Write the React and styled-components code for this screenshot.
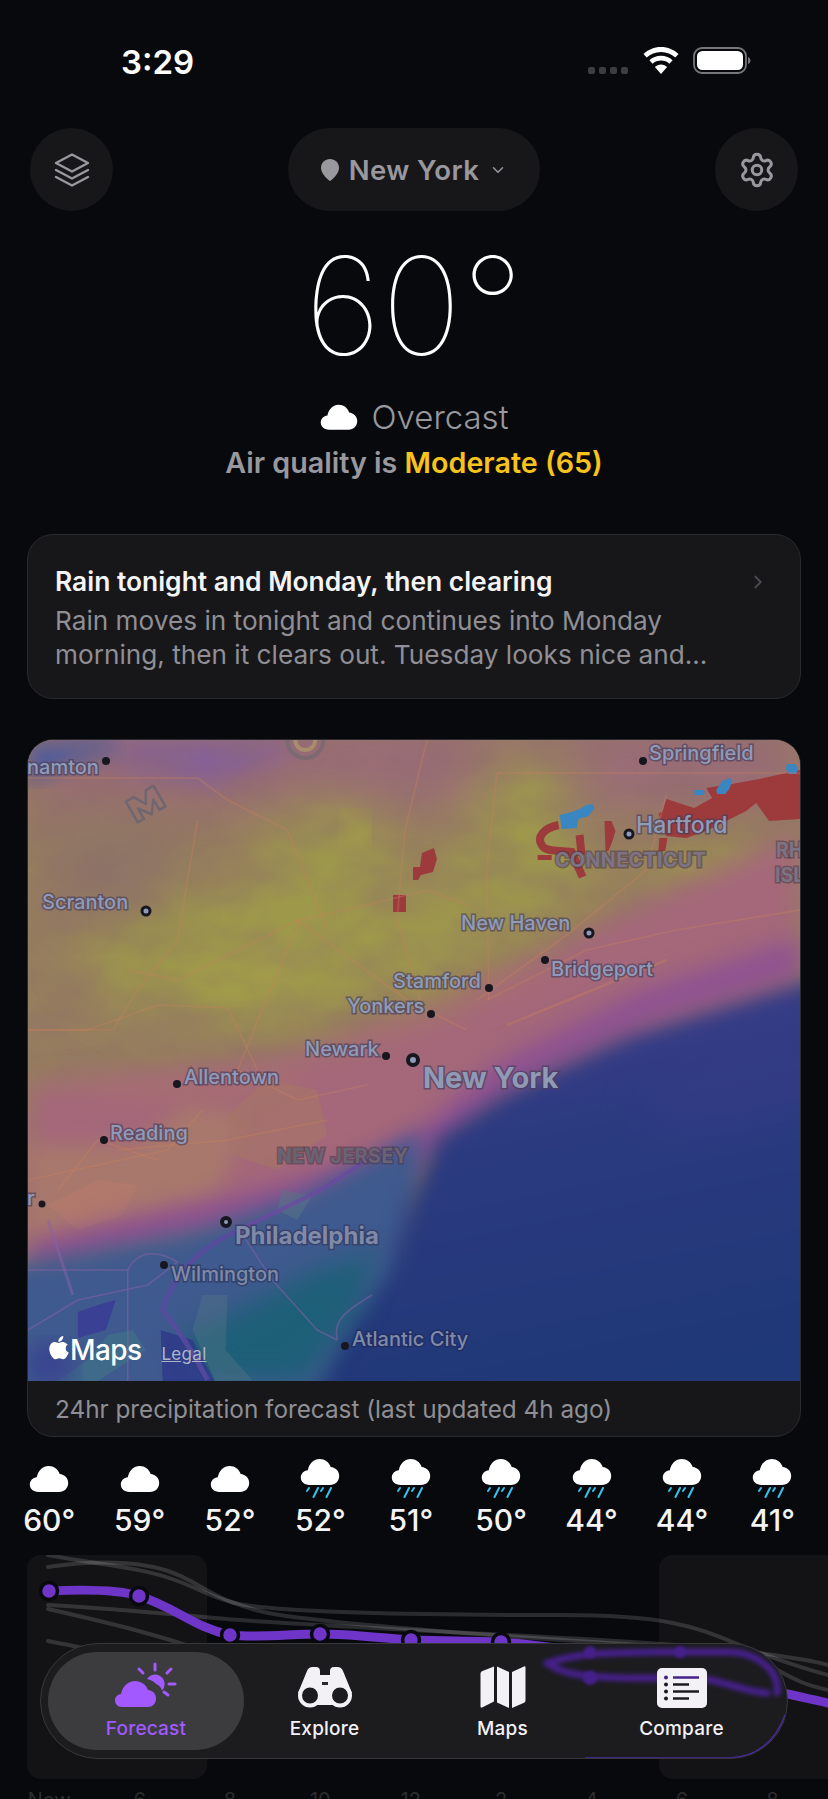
import React from "react";
import styled, { createGlobalStyle } from "styled-components";
import { Settings, ChevronDown, ChevronRight } from "lucide-react";

const GlobalStyle = createGlobalStyle`
  html, body {
    margin: 0;
    padding: 0;
    background: #08090c;
  }
  * {
    box-sizing: border-box;
  }
`;

const Page = styled.div`
  position: relative;
  width: 828px;
  height: 1799px;
  overflow: hidden;
  background: #08090c;
  color: #fff;
  font-family: Inter, "Liberation Sans", sans-serif;
`;

const StatusBar = styled.div`
  height: 128px;
  padding: 42px 77px 0 121px;
  display: flex;
  justify-content: space-between;
  align-items: flex-start;
`;
const Time = styled.div`
  font-size: 33px;
  line-height: 40px;
  font-weight: 600;
`;
const StatusIcons = styled.div`
  display: flex;
  align-items: flex-start;
  margin-top: 5px;
`;
const SignalDots = styled.div`
  display: flex;
  gap: 4px;
  margin: 20px 15px 0 0;
`;
const SignalDot = styled.span`
  width: 7px;
  height: 7px;
  border-radius: 2px;
  background: #3d3d40;
`;
const WifiSlot = styled.div`
  margin-right: 14px;
`;

const TopBar = styled.div`
  height: 83px;
  padding: 0 30px;
  display: flex;
  justify-content: space-between;
`;
const RoundButton = styled.div`
  width: 83px;
  height: 83px;
  border-radius: 50%;
  background: #17171a;
  display: flex;
  align-items: center;
  justify-content: center;
  color: #98989e;
`;
const LocationPill = styled.div`
  width: 252px;
  height: 83px;
  border-radius: 42px;
  background: #17171a;
  color: #98989e;
  font-size: 27.5px;
  font-weight: 600;
  letter-spacing: 0.4px;
  display: flex;
  align-items: center;
  justify-content: center;
  gap: 10px;
`;

const Hero = styled.div`
  display: flex;
  flex-direction: column;
  align-items: center;
`;
const BigTemp = styled.div`
  margin-top: 30px;
  height: 130px;
  font-size: 136px;
  line-height: 130px;
  font-weight: 100;
`;
const Condition = styled.div`
  margin-top: 25px;
  display: flex;
  align-items: center;
  gap: 14px;
  font-size: 33px;
  line-height: 42px;
  font-weight: 300;
  color: #98989e;
`;
const AirQuality = styled.div`
  margin-top: 5px;
  font-size: 28.7px;
  line-height: 40px;
  font-weight: 600;
  color: #98989e;
`;
const AirValue = styled.span`
  color: #f7c31c;
`;

const SummaryCard = styled.div`
  position: relative;
  margin: 51px 27px 0;
  height: 165px;
  padding: 28px 27px 0;
  border-radius: 26px;
  background: #17171a;
  border: 1.5px solid #2a2a2d;
`;
const SummaryTitle = styled.div`
  font-size: 26.4px;
  line-height: 36px;
  font-weight: 600;
  color: #f4f4f6;
`;
const SummaryText = styled.div`
  margin-top: 5px;
  font-size: 26.2px;
  line-height: 34px;
  color: #8f8f95;
  white-space: nowrap;
`;
const SummaryChevron = styled.div`
  position: absolute;
  top: 36px;
  right: 31px;
  color: #4a4a4e;
`;

const MapCard = styled.div`
  margin: 40px 27px 0;
  height: 698px;
  border-radius: 26px;
  background: #17171a;
  border: 1.5px solid #2b2b2e;
  overflow: hidden;
  display: flex;
  flex-direction: column;
`;
const MapArea = styled.div`
  position: relative;
  height: 641px;
  flex: none;
  overflow: hidden;
  background: #957d60;
`;
const MapDrawing = styled.svg`
  display: block;
  width: 100%;
  height: 100%;
`;
const MapLabel = styled.span`
  position: absolute;
  left: ${(p) => p.$x - 28}px;
  top: ${(p) => p.$y - 740}px;
  transform: translateY(-50%);
  font-size: ${(p) => p.$size || 20}px;
  font-weight: ${(p) => p.$weight || 500};
  letter-spacing: ${(p) => p.$spacing || 0}px;
  color: ${(p) => p.$color || "#8f9bb8"};
  -webkit-text-stroke: 3px ${(p) => p.$halo || "rgba(70,60,90,0.65)"};
  paint-order: stroke fill;
  white-space: nowrap;
`;
const MapDot = styled.span`
  position: absolute;
  left: ${(p) => p.$x - 28}px;
  top: ${(p) => p.$y - 740}px;
  width: ${(p) => p.$d}px;
  height: ${(p) => p.$d}px;
  transform: translate(-50%, -50%);
  border-radius: 50%;
  background: ${(p) => (p.$ring ? "#8f9bb8" : "#17171f")};
  border: ${(p) => (p.$ring ? `${p.$ring}px solid #17171f` : "none")};
`;
const MapsBadge = styled.div`
  position: absolute;
  left: 21px;
  bottom: 10px;
  display: flex;
  align-items: baseline;
  gap: 1px;
  font-size: 28px;
  line-height: 34px;
  font-weight: 500;
  letter-spacing: -0.6px;
  color: #fff;
`;
const LegalLink = styled.span`
  margin-left: 19px;
  font-size: 17px;
  font-weight: 400;
  letter-spacing: 0.3px;
  color: #aeb4c8;
  text-decoration: underline;
`;
const MapCaption = styled.div`
  flex: 1;
  display: flex;
  align-items: center;
  padding-left: 27px;
  font-size: 24.3px;
  color: #8f8f95;
  white-space: nowrap;
`;

const HourlyRow = styled.div`
  margin: 21px 0 0 4px;
  display: grid;
  grid-template-columns: repeat(9, 90.4px);
`;
const HourCell = styled.div`
  display: flex;
  flex-direction: column;
  align-items: center;
`;
const HourIcon = styled.div`
  height: 44px;
  padding-top: ${(p) => (p.$rain ? 0 : 7)}px;
  display: flex;
  align-items: flex-start;
  justify-content: center;
`;
const HourTemp = styled.div`
  font-size: 30px;
  line-height: 36px;
  font-weight: 500;
  color: #f4f4f6;
`;

const ChartWrap = styled.div`
  position: absolute;
  left: 0;
  top: 1555px;
  width: 828px;
  height: 244px;
`;
const ChartHighlight = styled.div`
  position: absolute;
  top: 0;
  left: ${(p) => p.$x}px;
  width: ${(p) => p.$w}px;
  height: 224px;
  border-radius: 14px;
  background: #131316;
`;
const ChartSvg = styled.svg`
  position: absolute;
  left: 0;
  top: 0;
`;
const AxisLabels = styled.div`
  position: absolute;
  left: 4px;
  top: 233px;
  display: grid;
  grid-template-columns: repeat(9, 90.4px);
`;
const AxisLabel = styled.span`
  text-align: center;
  font-size: 20px;
  line-height: 24px;
  color: #2c2c2f;
`;

const TabBar = styled.nav`
  position: absolute;
  left: 40px;
  top: 1643px;
  width: 748px;
  height: 116px;
  padding: 8px 7px;
  border-radius: 58px;
  background: #1c1c1f;
  border: 1.5px solid #38383b;
  display: grid;
  grid-template-columns: 196px 161px 195px 163px;
  overflow: hidden;
`;
const TabRefraction = styled.svg`
  position: absolute;
  left: -1.5px;
  top: -1.5px;
`;
const Tab = styled.div`
  position: relative;
  display: flex;
  flex-direction: column;
  align-items: center;
  justify-content: flex-start;
  padding-top: 10px;
  border-radius: 50px;
  background: ${(p) => (p.$active ? "#3c3c3f" : "transparent")};
  color: ${(p) => (p.$active ? "#a259ff" : "#f3f1f6")};
`;
const TabIcon = styled.div`
  height: 46px;
  display: flex;
  align-items: flex-end;
  justify-content: center;
`;
const TabLabel = styled.div`
  margin-top: 8px;
  font-size: 19px;
  line-height: 26px;
  font-weight: 500;
  letter-spacing: 0.2px;
`;

const CLOUD =
  "M9.5 27C4.3 27 .8 23.9.8 19.6c0-4 3-7 7-7.4C9.2 5.3 13.8.9 19.7.9c5.2 0 9.3 3.2 11 8 4.7.5 8.5 4.1 8.5 8.9 0 5.4-3.9 9.2-9.2 9.2Z";

function Cloud({ w = 40 }) {
  return (
    <svg width={w} height={(w * 28) / 40} viewBox="0 0 40 28" fill="#fff">
      <path d={CLOUD} />
    </svg>
  );
}

function RainCloud() {
  return (
    <svg width="40" height="40" viewBox="0 0 40 40">
      <path d={CLOUD} fill="#fff" />
      <g stroke="#34c3ee" strokeWidth="2" strokeLinecap="round">
        <path d="M9 30l-2 3M18 30l-4.5 9M23 30l-2 3M31 30l-4.5 9" />
      </g>
    </svg>
  );
}

function LayersIcon() {
  return (
    <svg width="38" height="36" viewBox="0 0 38 36" fill="none" stroke="currentColor" strokeWidth="2.4" strokeLinejoin="round" strokeLinecap="round">
      <path d="M19 2.5 35 11 19 19.5 3 11Z" />
      <path d="M3 18l16 8.5L35 18" />
      <path d="M3 25l16 8.5L35 25" />
    </svg>
  );
}

function PinIcon() {
  return (
    <svg width="18" height="22" viewBox="0 0 18 22" fill="currentColor">
      <path d="M9 0c5 0 9 3.8 9 8.8C18 14 13 19.5 9 22 5 19.5 0 14 0 8.8 0 3.8 4 0 9 0Z" />
    </svg>
  );
}

function WifiIcon() {
  return (
    <svg width="36" height="27" viewBox="0 0 36 27" fill="#fff">
      <path d="M18 0C11 0 5 2.7.5 7l3.2 3.5C7.4 7 12.4 4.9 18 4.9s10.6 2.1 14.3 5.6L35.5 7C31 2.7 25 0 18 0Z" />
      <path d="M18 8.8c-4.5 0-8.5 1.7-11.6 4.5l3.2 3.5c2.2-2 5.2-3.2 8.4-3.2s6.2 1.2 8.4 3.2l3.2-3.5C26.5 10.5 22.5 8.8 18 8.8Z" />
      <path d="M18 17.5c-2.4 0-4.5.9-6.1 2.4L18 27l6.1-7.1c-1.6-1.5-3.7-2.4-6.1-2.4Z" />
    </svg>
  );
}

function BatteryIcon() {
  return (
    <svg width="58" height="28" viewBox="0 0 58 28">
      <rect x="1" y="1" width="52" height="25" rx="8" fill="none" stroke="#77777a" strokeWidth="1.8" />
      <rect x="4" y="4" width="46" height="19" rx="5.5" fill="#fff" />
      <path d="M55 10c1.5.5 2.5 2 2.5 3.5S56.5 16.5 55 17Z" fill="#77777a" />
    </svg>
  );
}

function ForecastIcon() {
  return (
    <svg width="64" height="46" viewBox="0 0 64 46" fill="#a259ff">
      <g stroke="#a259ff" strokeWidth="3" strokeLinecap="round">
        <path d="M41 2v6M25 7l4 4M57 7l-4 4M55 22h6M54 33l-4-3" />
      </g>
      <path d="M33 17a9.5 9.5 0 1 1 15 11.5c-1-3-3-5.5-6-6.5-2-2.5-5-4-9-5Z" />
      <path d="M8 45c-4.5 0-7-3-7-6.5 0-3.5 2.5-6 6-6.5 1.5-8 7.5-13 14-13 6 0 11 3.5 13 9 5 .5 8 4 8 8.5 0 5-3.5 8.5-8.5 8.5Z" />
    </svg>
  );
}

function BinocularsIcon() {
  return (
    <svg width="56" height="41" viewBox="0 0 56 41">
      <path
        fill="#f3f1f6"
        d="M10 4C11 1.5 13 0 15.5 0H19c2.5 0 4 1.5 4 4v4h10V4c0-2.5 1.5-4 4-4h3.5C43 0 45 1.5 46 4L55 26 40 38H16L1 26Z"
      />
      <path fill="#2a2a2e" d="M25 15h6v3h-6Z" />
      <circle cx="13" cy="28.5" r="10" fill="#1c1c1f" stroke="#f3f1f6" strokeWidth="4" />
      <circle cx="43" cy="28.5" r="10" fill="#1c1c1f" stroke="#f3f1f6" strokeWidth="4" />
    </svg>
  );
}

function MapIcon() {
  return (
    <svg width="46" height="42" viewBox="0 0 46 42" fill="#f3f1f6">
      <path d="M14 .5v35L2 41.5c-1 .4-1.5 0-1.5-1V8C.5 6.5 1 5.5 2.5 5Z" />
      <path d="M17 .5l12 5.5v36l-12-5.5Z" />
      <path d="M32 6l12-5.5c1-.4 1.5 0 1.5 1V34c0 1.5-.5 2.5-2 3L32 42Z" />
    </svg>
  );
}

function CompareIcon() {
  return (
    <svg width="52" height="40" viewBox="0 0 52 40">
      <rect x="1" y="0" width="50" height="40" rx="5" fill="#f3f1f6" />
      <g fill="#1c1c1f">
        <circle cx="10" cy="16.5" r="2" />
        <circle cx="10" cy="23.5" r="2" />
        <circle cx="10" cy="30.5" r="2" />
      </g>
      <circle cx="10" cy="9.5" r="2" fill="#45208a" />
      <path d="M17 9.5h26" stroke="#45208a" strokeWidth="2.4" />
      <path d="M17 16.5h16M17 23.5h26M17 30.5h16" stroke="#1c1c1f" strokeWidth="2.4" />
    </svg>
  );
}

function AppleLogo() {
  return (
    <svg width="20" height="24" viewBox="0 0 20 24" fill="#fff">
      <path d="M14.3 0c.1 1.5-.4 2.9-1.3 4-.9 1.1-2.2 1.9-3.6 1.8-.2-1.4.5-2.9 1.3-3.8C11.6.9 13.1.1 14.3 0Z" />
      <path d="M19 8.2c-1.4.9-2.3 2.3-2.3 4 0 2 1.2 3.6 3 4.3-.5 1.4-1.1 2.7-2 3.9-1 1.4-2 2.8-3.6 2.8-1.5 0-2-.9-3.8-.9-1.8 0-2.4.9-3.8.9-1.6.1-2.8-1.5-3.8-2.9C.7 17.5-.8 12.3 1.2 8.9c1-1.7 2.7-2.7 4.5-2.8 1.5 0 2.8 1 3.7 1 .9 0 2.5-1.2 4.3-1 .7 0 2.9.3 4.3 2.1Z" />
    </svg>
  );
}

function MapBackdrop() {
  return (
    <MapDrawing viewBox="0 0 774 641" preserveAspectRatio="none">
      <defs>
        <filter id="soft" x="-40%" y="-40%" width="180%" height="180%" colorInterpolationFilters="sRGB">
          <feGaussianBlur stdDeviation="26" />
        </filter>
        <filter id="softer" x="-30%" y="-30%" width="160%" height="160%" colorInterpolationFilters="sRGB">
          <feGaussianBlur stdDeviation="13" />
        </filter>
        <filter id="edge" x="-10%" y="-10%" width="120%" height="120%" colorInterpolationFilters="sRGB">
          <feGaussianBlur stdDeviation="10" />
        </filter>
        <filter id="crisp" colorInterpolationFilters="sRGB">
          <feGaussianBlur stdDeviation="0.7" />
        </filter>
        <filter id="mottle" x="0" y="0" width="100%" height="100%" colorInterpolationFilters="sRGB">
          <feTurbulence type="fractalNoise" baseFrequency="0.016 0.026" numOctaves="3" seed="7" />
          <feColorMatrix values="0 0 0 0 0.55  0 0 0 0 0.42  0 0 0 0 0.42  1.8 0 0 0 -0.6" />
        </filter>
        <linearGradient id="ocean" x1="0.2" y1="0" x2="0.45" y2="1">
          <stop offset="0" stopColor="#423f8e" />
          <stop offset="0.42" stopColor="#2b3a7f" />
          <stop offset="1" stopColor="#1f3877" />
        </linearGradient>
      </defs>

      <rect width="774" height="641" fill="#977f5e" />
      <rect y="-20" width="774" height="90" fill="#9a6c78" filter="url(#soft)" />
      <path d="M0 0h90v14q-45 4-90 30Z" fill="#4a5aa0" filter="url(#edge)" />
      <path d="M90 0h190l-90 45-100-20Z" fill="#84609a" filter="url(#softer)" />

      <g fill="#9e9a4a" filter="url(#soft)">
        <ellipse cx="230" cy="215" rx="170" ry="65" />
        <ellipse cx="300" cy="130" rx="70" ry="65" />
        <ellipse cx="490" cy="130" rx="70" ry="65" />
        <ellipse cx="500" cy="40" rx="55" ry="26" />
        <ellipse cx="690" cy="130" rx="60" ry="26" />
        <ellipse cx="410" cy="205" rx="40" ry="50" />
      </g>
      <ellipse cx="85" cy="125" rx="60" ry="50" fill="#8e7468" filter="url(#soft)" />
      <ellipse cx="328" cy="95" rx="14" ry="22" fill="#a5a246" filter="url(#edge)" />
      <ellipse cx="210" cy="232" rx="70" ry="22" fill="#a3a048" filter="url(#softer)" />

      <rect width="774" height="420" filter="url(#mottle)" opacity="0.4" />

      <path d="M0 345 250 318 420 268 560 190 774 90V270L470 370 380 430 200 490 0 520Z" fill="#a4687a" filter="url(#softer)" />
      <path d="M0 345 130 360 250 355 300 310 420 265 470 235 540 225 360 300 220 340Z" fill="#a87070" filter="url(#softer)" />
      <path d="M0 405h110l50-40 60 10-30 80-100 30-90 15Z" fill="#a8786c" filter="url(#edge)" />
      <path d="M200 375 240 340 290 350 300 395 250 430 205 415Z" fill="#a67468" filter="url(#crisp)" opacity="0.7" />
      <path d="M20 465 70 440 110 445 95 475 50 490Z" fill="#b27a6c" filter="url(#crisp)" opacity="0.8" />
      <path d="M774 215 620 265 480 335 405 400 340 435 220 470 100 495 0 520" fill="none" stroke="#8a4e96" strokeWidth="28" filter="url(#softer)" />

      <path d="M-30 528 170 490 273 456 393 392 385 660H-30Z" fill="#3f5a8e" filter="url(#edge)" />
      <path d="M810 232 600 296 480 352 410 398 380 470 362 534 322 584 285 660H810Z" fill="url(#ocean)" filter="url(#edge)" />
      <ellipse cx="720" cy="350" rx="110" ry="30" fill="#3c3f8c" opacity="0.45" filter="url(#soft)" transform="rotate(-14 720 350)" />
      <path d="M150 600 230 560 290 530 350 510 330 570 300 610 280 641H170Z" fill="#1e5f78" filter="url(#softer)" />
      <path d="M175 555 200 555 198 610 225 640 188 641 165 590 Z" fill="#5a7a86" filter="url(#crisp)" opacity="0.35" />
      <path d="M255 450 285 456 270 480 250 470Z" fill="#587a88" filter="url(#crisp)" opacity="0.45" />
      <path d="M60 620 80 595 105 590 118 610 70 641H30Z" fill="#3f7688" filter="url(#crisp)" opacity="0.6" />
      <path d="M50 572 70 565 88 560 78 590 50 598Z" fill="#3a3c94" filter="url(#crisp)" opacity="0.85" />
      <path d="M133 590 165 600 187 641H135Z" fill="#2f3a8a" filter="url(#crisp)" opacity="0.85" />
      <path d="M0 610 30 600 50 641H0Z" fill="#3a4490" filter="url(#edge)" />

      <g fill="#9c3a3c" filter="url(#crisp)">
        <path d="M774 30 733 39 706 44 680 48 686 58 668 68 640 59 636 71 632 74 640 96 660 98 680 91 700 81 720 71 730 63 743 81 774 79Z" />
        <path d="M578 81h7l4 10-3 10-4 10h-3Z" />
        <path d="M633 98h8l-2 13h-7Z" />
        <path d="M511 115h14v5h-14Z" />
        <path d="M395 113l12-5 3 11-4 13-12 3-3 5h-5v-13h7Z" />
        <path d="M366 155h13v17h-13Z" />
      </g>
      <path d="M532 85C517 88 510 97 515 105 519 112 530 110 545 112L556 137M553 95 555 115" fill="none" stroke="#9c3a3c" strokeWidth="8" filter="url(#crisp)" />
      <g fill="#3a86c0" filter="url(#crisp)">
        <path d="M533 75l12-3 8-3 7-4 6-1 2 4-6 8-10 3-2 9-15 1Z" />
        <path d="M690 50l6-9 8-3 2 3-3 8-4 5h-8Z" />
        <path d="M668 50h10v5h-10Z" />
        <path d="M761 24h8l3 5-2 5h-7l-3-5Z" />
      </g>

      <g fill="none" stroke="#c8805c" strokeOpacity="0.38" strokeWidth="1.6">
        <path d="M400 0 378 90 370 180 395 265" />
        <path d="M470 33 460 130 462 260" />
        <path d="M470 33H774" />
        <path d="M0 38H170l30 22 60 30 40 100" />
        <path d="M170 80 150 200 110 250 85 290 0 290" />
        <path d="M270 180 380 260 440 290" />
        <path d="M272 180 210 330 270 360 340 345" />
        <path d="M100 230 150 240 272 180 340 165 400 150 440 165" />
        <path d="M0 290 60 290 130 265 200 268 230 330" />
        <path d="M640 55 620 130 540 195 450 260" />
        <path d="M460 260 560 210 650 190 774 170" />
        <path d="M480 285 640 220" strokeWidth="2.5" />
        <path d="M175 370 140 410 0 440" />
        <path d="M90 410 200 400 300 380" />
        <path d="M30 450 70 400 130 420" />
      </g>
      <g fill="none" stroke="#8a62a8" strokeOpacity="0.5" strokeWidth="1.6">
        <path d="M0 530H100V641" />
        <path d="M100 530C110 510 130 510 150 522L120 545 50 560 0 590" />
        <path d="M212 490 245 540 290 590 310 600" />
        <path d="M310 600C305 580 320 570 345 555" />
        <path d="M20 480 45 555" strokeWidth="3" />
      </g>
      <path d="M207 492C170 510 145 535 135 570 150 590 165 610 180 640" fill="none" stroke="#5a4aa0" strokeWidth="5" strokeOpacity="0.8" filter="url(#crisp)" />
      <path d="M207 492 290 452 340 420" fill="none" stroke="#6a4aa0" strokeWidth="4" strokeOpacity="0.8" filter="url(#crisp)" />
      <path d="M296 0a18 18 0 0 1-36 0" fill="none" stroke="#7b6a72" strokeWidth="4" />
      <path d="M288 0a10 10 0 0 1-20 0" fill="none" stroke="#a88c6e" strokeWidth="4" />
      <g transform="translate(118 64) rotate(-30)">
        <path d="M-16 -12H-7L0 0 7 -12H16V12H9V0L0 12-9 0V12H-16Z" fill="none" stroke="#6f6670" strokeWidth="2.5" strokeLinejoin="round" />
      </g>
    </MapDrawing>
  );
}

const STATE_LABEL = { weight: 700, size: 19.5, color: "#7c7384", halo: "rgba(70,55,70,0.55)" };

const MAP_LABELS = [
  { text: "Springfield", x: 649, y: 753 },
  { text: "namton", x: 27, y: 767 },
  { text: "Hartford", x: 636, y: 825, size: 23 },
  { text: "CONNECTICUT", x: 555, y: 860, spacing: 0.5, ...STATE_LABEL },
  { text: "RH", x: 776, y: 850, ...STATE_LABEL },
  { text: "ISL", x: 775, y: 875, ...STATE_LABEL },
  { text: "Scranton", x: 42, y: 902 },
  { text: "New Haven", x: 461, y: 923 },
  { text: "Bridgeport", x: 551, y: 969 },
  { text: "Stamford", x: 393, y: 981 },
  { text: "Yonkers", x: 347, y: 1006 },
  { text: "Newark", x: 305, y: 1049 },
  { text: "New York", x: 423, y: 1077, size: 29, weight: 700, color: "#8f9ab4" },
  { text: "Allentown", x: 184, y: 1077 },
  { text: "Reading", x: 110, y: 1133 },
  { text: "NEW JERSEY", x: 277, y: 1156, spacing: 0.5, ...STATE_LABEL, color: "#6a6374" },
  { text: "r", x: 27, y: 1198 },
  { text: "Philadelphia", x: 235, y: 1235, size: 24, weight: 700, color: "#7f8aa6", halo: "rgba(50,50,90,0.6)" },
  { text: "Wilmington", x: 171, y: 1274, color: "#7f8aa6", halo: "rgba(40,50,90,0.6)" },
  { text: "Atlantic City", x: 352, y: 1339, color: "#7f8aa6", halo: "rgba(30,40,90,0.6)" },
];

const MAP_DOTS = [
  { x: 643, y: 761, d: 8 },
  { x: 106, y: 761, d: 8 },
  { x: 629, y: 834, d: 11, ring: 3 },
  { x: 146, y: 911, d: 11, ring: 3 },
  { x: 589, y: 933, d: 11, ring: 3 },
  { x: 545, y: 960, d: 8 },
  { x: 489, y: 988, d: 8 },
  { x: 431, y: 1014, d: 8 },
  { x: 386, y: 1056, d: 8 },
  { x: 413, y: 1060, d: 14, ring: 4 },
  { x: 177, y: 1084, d: 8 },
  { x: 104, y: 1140, d: 8 },
  { x: 42, y: 1204, d: 7 },
  { x: 226, y: 1222, d: 12, ring: 4 },
  { x: 164, y: 1265, d: 8 },
  { x: 345, y: 1346, d: 8 },
];

const HOURS = [
  { temp: "60°", rain: false, at: "Now" },
  { temp: "59°", rain: false, at: "6" },
  { temp: "52°", rain: false, at: "8" },
  { temp: "52°", rain: true, at: "10" },
  { temp: "51°", rain: true, at: "12" },
  { temp: "50°", rain: true, at: "2" },
  { temp: "44°", rain: true, at: "4" },
  { temp: "44°", rain: true, at: "6" },
  { temp: "41°", rain: true, at: "8" },
];

const CHART_POINTS = [
  [49, 36],
  [139, 41],
  [230, 80],
  [320, 79],
  [411, 85],
  [501, 87],
];

const GREY_LINES = [
  "M48 0C100 10 140 12 175 25S220 48 260 52 400 60 560 60 700 85 828 120",
  "M48 12C90 6 130 5 165 15S215 50 280 60 480 80 640 90 760 120 828 135",
  "M48 50C120 54 180 60 240 65S420 75 600 85 828 110 828 110",
  "M48 54C110 68 160 80 215 100",
  "M48 86C70 90 90 95 120 100",
];

function Chart() {
  return (
    <ChartWrap>
      <ChartHighlight $x={27} $w={180} />
      <ChartHighlight $x={659} $w={200} />
      <ChartSvg width="828" height="244" viewBox="0 0 828 244" fill="none">
        {GREY_LINES.map((d) => (
          <path key={d} d={d} stroke="#fff" strokeOpacity="0.14" strokeWidth="4" strokeLinecap="round" />
        ))}
        <path
          d="M49 36C90 34 120 35 139 41 175 52 195 73 230 80 260 83 290 79 320 79 350 79 380 83 411 85L501 87C600 95 700 120 828 148"
          stroke="#6f35c8"
          strokeWidth="9"
          strokeLinecap="round"
        />
        {CHART_POINTS.map(([x, y]) => (
          <circle key={x} cx={x} cy={y} r="8.5" fill="#6f35c8" stroke="#08090c" strokeWidth="3.5" />
        ))}
      </ChartSvg>
      <AxisLabels>
        {HOURS.map((h, i) => (
          <AxisLabel key={i}>{h.at}</AxisLabel>
        ))}
      </AxisLabels>
    </ChartWrap>
  );
}

export default function App() {
  return (
    <Page>
      <GlobalStyle />
      <StatusBar>
        <Time>3:29</Time>
        <StatusIcons>
          <SignalDots>
            <SignalDot />
            <SignalDot />
            <SignalDot />
            <SignalDot />
          </SignalDots>
          <WifiSlot>
            <WifiIcon />
          </WifiSlot>
          <BatteryIcon />
        </StatusIcons>
      </StatusBar>

      <TopBar>
        <RoundButton>
          <LayersIcon />
        </RoundButton>
        <LocationPill>
          <PinIcon />
          New York
          <ChevronDown size={18} strokeWidth={2} />
        </LocationPill>
        <RoundButton>
          <Settings size={38} strokeWidth={1.9} />
        </RoundButton>
      </TopBar>

      <Hero>
        <BigTemp>60°</BigTemp>
        <Condition>
          <Cloud w={38} />
          Overcast
        </Condition>
        <AirQuality>
          Air quality is <AirValue>Moderate (65)</AirValue>
        </AirQuality>
      </Hero>

      <SummaryCard>
        <SummaryTitle>Rain tonight and Monday, then clearing</SummaryTitle>
        <SummaryText>
          Rain moves in tonight and continues into Monday
          <br />
          morning, then it clears out. Tuesday looks nice and...
        </SummaryText>
        <SummaryChevron>
          <ChevronRight size={22} strokeWidth={2} />
        </SummaryChevron>
      </SummaryCard>

      <MapCard>
        <MapArea>
          <MapBackdrop />
          {MAP_DOTS.map((d) => (
            <MapDot key={`${d.x}-${d.y}`} $x={d.x} $y={d.y} $d={d.d} $ring={d.ring} />
          ))}
          {MAP_LABELS.map((l) => (
            <MapLabel
              key={l.text}
              $x={l.x}
              $y={l.y}
              $size={l.size}
              $weight={l.weight}
              $spacing={l.spacing}
              $color={l.color}
              $halo={l.halo}
            >
              {l.text}
            </MapLabel>
          ))}
          <MapsBadge>
            <AppleLogo />
            Maps
            <LegalLink>Legal</LegalLink>
          </MapsBadge>
        </MapArea>
        <MapCaption>24hr precipitation forecast (last updated 4h ago)</MapCaption>
      </MapCard>

      <HourlyRow>
        {HOURS.map((h, i) => (
          <HourCell key={i}>
            <HourIcon $rain={h.rain}>{h.rain ? <RainCloud /> : <Cloud />}</HourIcon>
            <HourTemp>{h.temp}</HourTemp>
          </HourCell>
        ))}
      </HourlyRow>

      <Chart />

      <TabBar>
        <TabRefraction width="748" height="116" viewBox="0 0 748 116" fill="none">
          <g stroke="#45208a" strokeWidth="7" strokeLinecap="round" filter="blur(2px)">
            <path d="M507 20C540 10 560 10 620 9H690C720 10 740 30 737 50" />
            <path d="M507 20C520 30 540 35 600 35H660C690 40 710 50 727 50" />
          </g>
          <g fill="#45208a" filter="blur(1.5px)">
            <circle cx="550" cy="9" r="6" />
            <circle cx="640" cy="9" r="6" />
            <circle cx="550" cy="35" r="7" />
          </g>
          <path d="M545 115H690C715 114 735 100 745 72" stroke="#4a28a0" strokeWidth="1.5" />
        </TabRefraction>
        <Tab $active>
          <TabIcon>
            <ForecastIcon />
          </TabIcon>
          <TabLabel>Forecast</TabLabel>
        </Tab>
        <Tab>
          <TabIcon>
            <BinocularsIcon />
          </TabIcon>
          <TabLabel>Explore</TabLabel>
        </Tab>
        <Tab>
          <TabIcon>
            <MapIcon />
          </TabIcon>
          <TabLabel>Maps</TabLabel>
        </Tab>
        <Tab>
          <TabIcon>
            <CompareIcon />
          </TabIcon>
          <TabLabel>Compare</TabLabel>
        </Tab>
      </TabBar>
    </Page>
  );
}
